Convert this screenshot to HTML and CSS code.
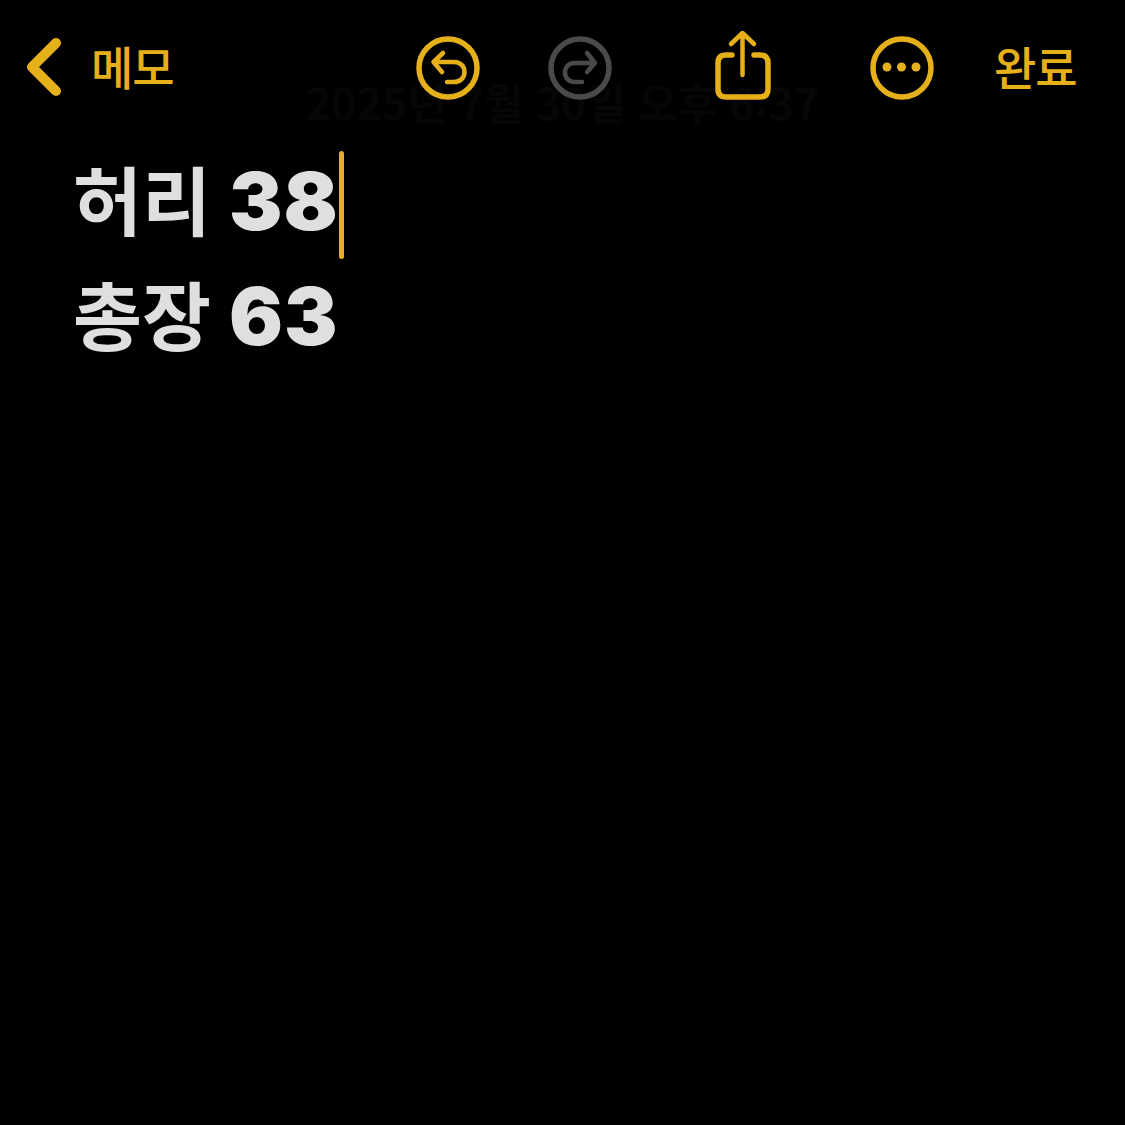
FILE: index.html
```html
<!DOCTYPE html>
<html lang="ko">
<head>
    <meta charset="UTF-8">
    <meta name="viewport" content="width=device-width, initial-scale=1.0">
    <title>메모</title>
    <link rel="stylesheet" href="styles.css">
</head>
<body>

    <div class="toolbar">
        <div class="back">
            <svg class="chevron" width="38" height="60" viewBox="0 0 38 60">
                <path d="M31 5 L7 29 L31 53"/>
            </svg>
            <span class="back-label">메모</span>
        </div>

        <div class="tools">
            <svg class="icon" width="66" height="66" viewBox="0 0 66 66">
                <circle cx="33" cy="33" r="29"/>
                <path class="thin" d="M19 27 H39 C45 27 49.500 31 49.500 37 C49.500 43 45 47 39 47 H32 M28 18 L18.500 27 L27 37"/>
            </svg>
            <svg class="icon icon-off" width="66" height="66" viewBox="0 0 66 66">
                <circle cx="33" cy="33" r="29"/>
                <path class="thin" d="M47 28 H28 C22 28 18 32 18 37.500 C18 43 22 47 28 47 H35 M40 18 L48 28 L40 37"/>
            </svg>
            <svg class="icon share" width="60" height="74" viewBox="0 0 60 74">
                <path d="M19 26 H13 Q5 26 5 34 V60 Q5 68 13 68 H47 Q55 68 55 60 V34 Q55 26 47 26 H41"/>
                <path class="thin" d="M29.500 46 V5 M18 15 L29.500 4 L41 15"/>
            </svg>
            <svg class="icon more" width="66" height="66" viewBox="0 0 66 66">
                <circle cx="33" cy="33" r="29"/>
                <circle class="dot" cx="18" cy="32" r="4.500"/>
                <circle class="dot" cx="32.500" cy="32" r="4.500"/>
                <circle class="dot" cx="47" cy="32" r="4.500"/>
            </svg>
        </div>

        <span class="done">완료</span>
    </div>

    <div class="ghost-title">2025년 7월 30일 오후 6:37</div>

    <div class="note">
        <div class="line"><span class="word">허리</span><span class="num">38</span><span class="caret"></span></div>
        <div class="line"><span class="word">총장</span><span class="num">63</span></div>
    </div>

</body>
</html>
```

FILE: styles.css
```css
* {
    box-sizing: border-box;
    margin: 0;
    padding: 0;
}

body {
    width: 1125px;
    height: 1125px;
    overflow: hidden;
    background-color: #000;
    font-family: "Noto Sans CJK KR", sans-serif;
}

.toolbar {
    position: relative;
    z-index: 1;
    display: flex;
    align-items: center;
    height: 66px;
    margin-top: 35px;
    padding-left: 25px;
    color: #e6b01a;
}

.back {
    display: flex;
    align-items: center;
    gap: 28px;
    width: 390px;
}

.chevron path {
    fill: none;
    stroke: #e6b01a;
    stroke-width: 10;
    stroke-linecap: round;
    stroke-linejoin: round;
}

.back-label,
.done {
    margin-top: -6px;
    font-size: 46px;
    font-weight: 500;
    letter-spacing: -1px;
}

.tools {
    display: flex;
    align-items: center;
}

.icon {
    flex: none;
    margin-right: 66px;
    fill: none;
    stroke: #e6b01a;
    stroke-width: 5.500;
    stroke-linecap: round;
    stroke-linejoin: round;
}

.icon .thin {
    stroke-width: 4.500;
}

.icon .dot {
    fill: #e6b01a;
    stroke: none;
}

.icon-off {
    stroke: #4a4a4c;
}

.share {
    margin-top: -4px;
    margin-right: 96px;
    margin-left: 34px;
}

.icon.more {
    margin-right: 59px;
}

.ghost-title {
    height: 0;
    text-align: center;
    font-size: 43px;
    font-weight: 700;
    line-height: 0;
    color: #060606;
}

.note {
    padding-top: 46px;
    padding-left: 73px;
    color: #dfdfdf;
}

.line {
    display: flex;
    align-items: center;
    height: 115px;
    white-space: pre;
}

.word {
    margin-right: 18px;
    margin-bottom: 14px;
    font-size: 75px;
    font-weight: 700;
}

.num {
    margin-bottom: 8px;
    font-family: "Inter", sans-serif;
    font-size: 80px;
    font-weight: 900;
    letter-spacing: 1px;
}

.caret {
    width: 5px;
    height: 108px;
    background: #e6b01a;
    border-radius: 3px;
}
```
